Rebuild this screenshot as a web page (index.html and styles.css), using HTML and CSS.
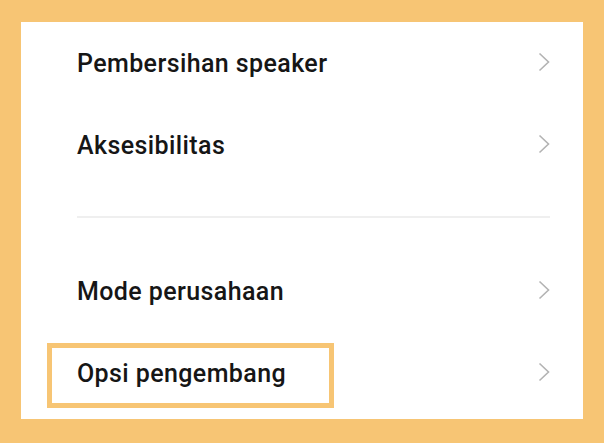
FILE: index.html
```html
<!DOCTYPE html>
<html lang="id">
<head>
<meta charset="utf-8">
<link rel="stylesheet" href="styles.css">
</head>
<body>
<div class="frame">
  <div class="panel">
    <div class="row"><span class="label">Pembersihan speaker</span><svg class="chev" viewBox="0 0 12 20"><path d="M1.5 1.5 L10.5 10 L1.5 18.5"/></svg></div>
    <div class="row"><span class="label">Aksesibilitas</span><svg class="chev" viewBox="0 0 12 20"><path d="M1.5 1.5 L10.5 10 L1.5 18.5"/></svg></div>
    <div class="divider-wrap"><div class="divider"></div></div>
    <div class="row"><span class="label">Mode perusahaan</span><svg class="chev" viewBox="0 0 12 20"><path d="M1.5 1.5 L10.5 10 L1.5 18.5"/></svg></div>
    <div class="row highlighted"><span class="label">Opsi pengembang</span><svg class="chev" viewBox="0 0 12 20"><path d="M1.5 1.5 L10.5 10 L1.5 18.5"/></svg><div class="mark"></div></div>
  </div>
</div>
</body>
</html>
```
FILE: styles.css
```css
html, body {
  margin: 0;
  padding: 0;
}
body {
  background: #f7c574;
  width: 604px;
  height: 443px;
  overflow: hidden;
}
.frame {
  padding: 22px 21px 24px 21px;
  height: 443px;
  box-sizing: border-box;
}
.panel {
  background: #ffffff;
  height: 100%;
  display: flex;
  flex-direction: column;
}
.row {
  position: relative;
  height: 82px;
  display: flex;
  align-items: center;
  justify-content: space-between;
  padding: 0 33px 0 56px;
}
.label {
  font-family: Roboto, "Liberation Sans", sans-serif;
  font-weight: 500;
  font-size: 25px;
  color: #161616;
  letter-spacing: 0.4px;
}
.chev {
  width: 12px;
  height: 20px;
  fill: none;
  stroke: #b3b3b3;
  stroke-width: 1.6;
  margin-top: -2px;
}
.divider-wrap {
  height: 64px;
  padding: 0 33px 0 56px;
  display: flex;
  flex-direction: column;
  justify-content: flex-start;
}
.divider {
  margin-top: 30px;
  height: 2px;
  background: #efefef;
}
.mark {
  position: absolute;
  left: 26px;
  top: 11px;
  width: 287px;
  height: 65px;
  box-sizing: border-box;
  border: 5px solid #f7c574;
}
```
